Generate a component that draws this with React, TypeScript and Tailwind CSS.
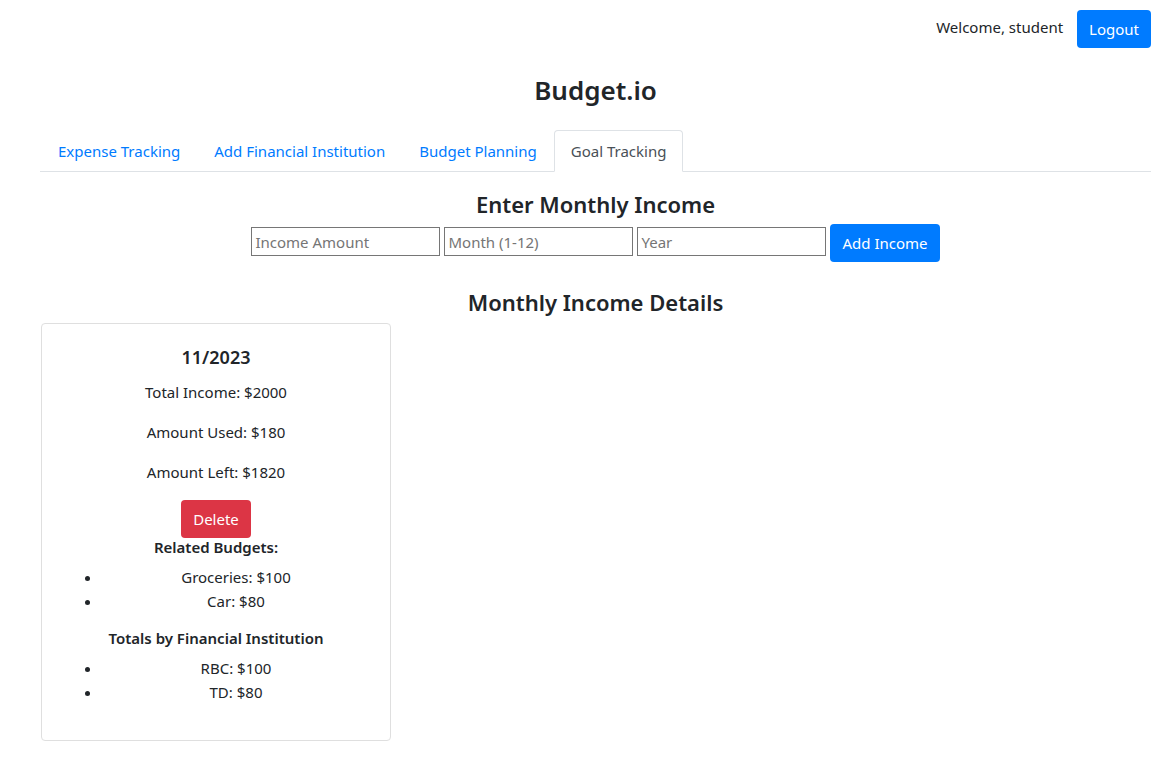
import React from 'react';

const TABS = ['Expense Tracking', 'Add Financial Institution', 'Budget Planning', 'Goal Tracking'];

export default function App() {
  return (
    <div className="min-h-screen bg-white pl-[40px] pr-[17px] text-[15px] leading-6 text-[#212529] [font-family:'Noto_Sans',sans-serif]">
      {/* top bar */}
      <div className="flex items-center justify-end gap-[14px] pt-[10px]">
        <span className="-mt-[4px]">Welcome, student</span>
        <button className="h-[38px] rounded bg-[#007bff] px-3 text-white">Logout</button>
      </div>

      <h3 className="mt-[25px] text-center text-[26px] leading-[34px] font-semibold">Budget.io</h3>

      {/* tabs */}
      <div className="mt-[23px] flex border-b border-[#dee2e6] pl-[1px]">
        {TABS.map((t) => {
          const active = t === 'Goal Tracking';
          return (
            <div
              key={t}
              className={
                active
                  ? '-mb-px rounded-t border border-[#dee2e6] border-b-white bg-white px-4 py-2 text-[#495057]'
                  : '-mb-px border border-transparent px-4 py-2 text-[#007bff]'
              }
            >
              {t}
            </div>
          );
        })}
      </div>

      {/* income form */}
      <h4 className="mt-[18px] text-center text-[22px] leading-[29px] font-semibold">Enter Monthly Income</h4>
      <div className="mt-[5px] flex items-start justify-center gap-[4px]">
        <input placeholder="Income Amount" className="mt-[3px] h-[29px] w-[189px] border border-[#767676] px-[3px] placeholder:text-[#757575]" />
        <input placeholder="Month (1-12)" className="mt-[3px] h-[29px] w-[189px] border border-[#767676] px-[3px] placeholder:text-[#757575]" />
        <input placeholder="Year" className="mt-[3px] h-[29px] w-[189px] border border-[#767676] px-[3px] placeholder:text-[#757575]" />
        <button className="h-[38px] rounded bg-[#007bff] px-3 text-white">Add Income</button>
      </div>

      <h4 className="mt-[26px] mb-[6px] text-center text-[22px] leading-[29px] font-semibold">Monthly Income Details</h4>

      {/* card */}
      <div className="ml-[1px] w-[350px] rounded border border-[#dfdfdf] p-5 text-center">
        <h5 className="mt-px mb-[11px] text-[18px] leading-6 font-semibold">11/2023</h5>
        <p className="mb-4">Total Income: $2000</p>
        <p className="mb-4">Amount Used: $180</p>
        <p className="mb-0">Amount Left: $1820</p>
        <button className="mt-4 h-[38px] rounded bg-[#dc3545] px-3 text-white">Delete</button>
        <h6 className="mb-2 text-[15px] leading-[19px] font-semibold">Related Budgets:</h6>
        <ul className="mb-4 list-disc pl-10">
          <li>Groceries: $100</li>
          <li>Car: $80</li>
        </ul>
        <h6 className="mb-2 text-[15px] leading-[19px] font-semibold">Totals by Financial Institution</h6>
        <ul className="mb-4 list-disc pl-10">
          <li>RBC: $100</li>
          <li>TD: $80</li>
        </ul>
      </div>
    </div>
  );
}
